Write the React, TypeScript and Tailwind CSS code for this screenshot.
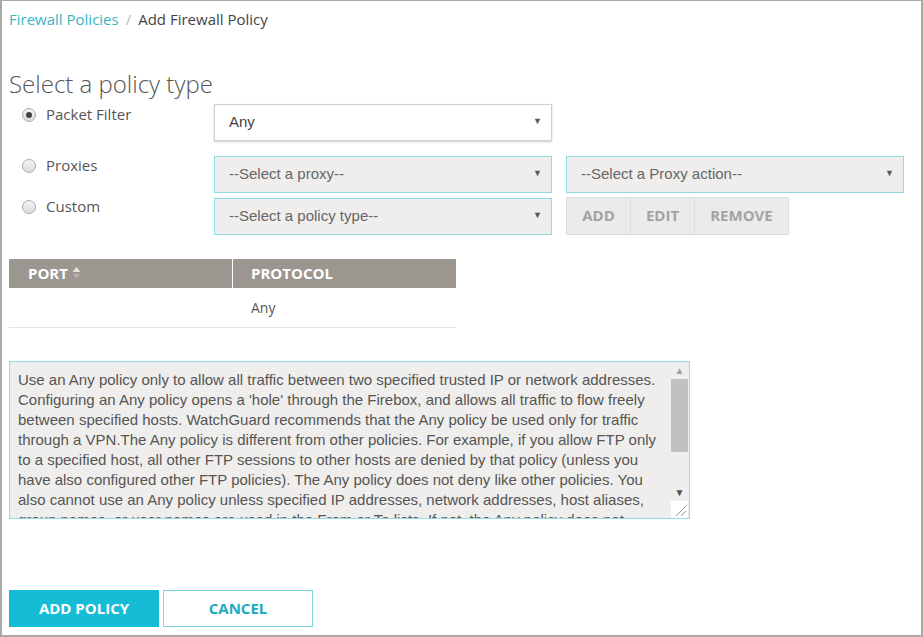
import { useState } from 'react';

const helpText =
  "Use an Any policy only to allow all traffic between two specified trusted IP or network addresses. Configuring an Any policy opens a 'hole' through the Firebox, and allows all traffic to flow freely between specified hosts. WatchGuard recommends that the Any policy be used only for traffic through a VPN.The Any policy is different from other policies. For example, if you allow FTP only to a specified host, all other FTP sessions to other hosts are denied by that policy (unless you have also configured other FTP policies). The Any policy does not deny like other policies. You also cannot use an Any policy unless specified IP addresses, network addresses, host aliases, group names, or user names are used in the From or To lists. If not, the Any policy does not operate.";

function Radio({ checked }: { checked: boolean }) {
  return (
    <span className="w-[14px] h-[14px] rounded-full border border-[#a9a9a9] bg-gradient-to-b from-[#f4f4f4] to-[#dcdcdc] flex items-center justify-center shrink-0">
      {checked && <span className="w-[6px] h-[6px] rounded-full bg-[#444]" />}
    </span>
  );
}

function FakeSelect({ label, primary }: { label: string; primary?: boolean }) {
  return (
    <div
      className={`w-[338px] h-[37px] flex items-center justify-between pl-[14px] pr-[9px] font-['Liberation_Sans',Arial,sans-serif] text-[15px] ${
        primary
          ? 'bg-white border border-[#cfcfcf] shadow-[0_1px_2px_rgba(0,0,0,0.2)] text-[#444]'
          : 'bg-[#efeeed] border border-[#93dbe2] text-[#666]'
      }`}
    >
      <span>{label}</span>
      <span className="text-[9px] text-[#555]">▼</span>
    </div>
  );
}

export default function App() {
  const [policyType, setPolicyType] = useState<'packet' | 'proxy' | 'custom'>('packet');

  return (
    <div className="w-[923px] h-[637px] bg-white border-t border-x-2 border-b-2 border-[#a9a9a9] font-['Open_Sans',sans-serif] text-[#555] flex flex-col">
      {/* Breadcrumb */}
      <div className="pl-[7px] pt-[7px] text-[15px] flex items-center gap-[7px]">
        <a href="#" className="text-[#3cb4c2]">Firewall Policies</a>
        <span className="text-[#bbb]">/</span>
        <span className="text-[#444]">Add Firewall Policy</span>
      </div>

      <h2 className="pl-[7px] mt-[39px] text-[24px] leading-[28px] text-[#555] font-light">Select a policy type</h2>

      <div className="flex mt-[6px]">
        {/* radios */}
        <div className="w-[212px] pl-[20px] flex flex-col text-[15px] text-[#555]">
          <label className="flex items-center gap-[10px] h-[22px]" onClick={() => setPolicyType('packet')}>
            <Radio checked={policyType === 'packet'} />
            Packet Filter
          </label>
          <label className="flex items-center gap-[10px] h-[22px] mt-[29px]" onClick={() => setPolicyType('proxy')}>
            <Radio checked={policyType === 'proxy'} />
            Proxies
          </label>
          <label className="flex items-center gap-[10px] h-[22px] mt-[19px]" onClick={() => setPolicyType('custom')}>
            <Radio checked={policyType === 'custom'} />
            Custom
          </label>
        </div>

        {/* selects */}
        <div className="flex flex-col">
          <FakeSelect label="Any" primary />
          <div className="flex gap-[14px] mt-[15px]">
            <div className="flex flex-col gap-[5px]">
              <FakeSelect label="--Select a proxy--" />
              <FakeSelect label="--Select a policy type--" />
            </div>
            <div className="flex flex-col gap-[4px]">
              <FakeSelect label="--Select a Proxy action--" />
              <div className="flex text-[15px] font-bold text-[#a3a3a3]">
                <button className="w-[65px] h-[38px] bg-[#ebebeb] border border-[#dcdcdc]">ADD</button>
                <button className="w-[64px] h-[38px] bg-[#ebebeb] border border-l-0 border-[#dcdcdc]">EDIT</button>
                <button className="w-[94px] h-[38px] bg-[#ebebeb] border border-l-0 border-[#dcdcdc]">REMOVE</button>
              </div>
            </div>
          </div>
        </div>
      </div>

      {/* Table */}
      <div className="ml-[7px] mt-[24px] w-[447px]">
        <div className="flex h-[29px] bg-[#9c9690] text-white text-[15px] font-bold">
          <div className="w-[224px] border-r border-white flex items-center pl-[19px] gap-[4px]">
            PORT
            <svg width="9" height="14" viewBox="0 0 9 14">
              <path d="M4.5 1 L8.5 6 L0.5 6 Z" fill="#e4e1de" />
              <path d="M4.5 13 L8.5 8 L0.5 8 Z" fill="#b5b0ab" />
            </svg>
          </div>
          <div className="flex-1 flex items-center pl-[18px]">PROTOCOL</div>
        </div>
        <div className="flex h-[40px] border-b border-[#e3e3e3] text-[14px] text-[#555]">
          <div className="w-[224px]" />
          <div className="flex-1 flex items-center pl-[18px]">Any</div>
        </div>
      </div>

      {/* Description */}
      <div className="ml-[7px] mt-[33px] w-[681px] h-[158px] bg-[#efeeec] border border-[#93dbe2] flex">
        <div className="flex-1 overflow-hidden pl-[8px] pt-[8px] pr-[6px] font-['Liberation_Sans',Arial,sans-serif] text-[15px] leading-[20px] text-[#555]">
          {helpText}
        </div>
        <div className="w-[17px] flex flex-col items-center mr-[1px]">
          <span className="h-[17px] text-[10px] text-[#a3a3a3] flex items-center">▲</span>
          <span className="w-[17px] h-[73px] bg-[#c1c1c1]" />
          <span className="flex-1" />
          <span className="h-[17px] text-[10px] text-[#505050] flex items-center">▼</span>
          <span className="w-[17px] h-[17px] bg-white relative">
            <svg width="17" height="17" className="absolute inset-0">
              <line x1="5" y1="15" x2="15" y2="5" stroke="#999" strokeWidth="1" />
              <line x1="10" y1="15" x2="15" y2="10" stroke="#999" strokeWidth="1" />
            </svg>
          </span>
        </div>
      </div>

      {/* Footer buttons */}
      <div className="ml-[7px] mt-[71px] flex gap-[4px] text-[15px] font-bold">
        <button className="w-[150px] h-[37px] bg-[#14bcd5] text-white">ADD POLICY</button>
        <button className="w-[150px] h-[37px] bg-white border border-[#7fd5e2] text-[#21a9c0]">CANCEL</button>
      </div>
    </div>
  );
}
